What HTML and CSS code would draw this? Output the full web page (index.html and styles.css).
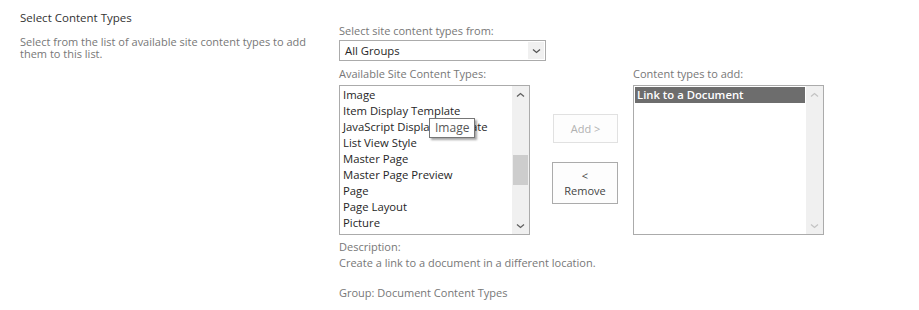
FILE: index.html
```html
<!DOCTYPE html>
<html>
<head>
<meta charset="utf-8">
<link rel="stylesheet" href="styles.css">
</head>
<body>
<div class="section">
  <div class="intro">
    <h3 class="title">Select Content Types</h3>
    <p class="desc">Select from the list of available site content types to add them to this list.</p>
  </div>
  <div class="form">
    <div class="label">Select site content types from:</div>
    <div class="dropdown">
      <span class="dd-value">All Groups</span>
      <span class="dd-btn"><svg width="9" height="6" viewBox="0 0 9 6"><path d="M1 1.5 L4.5 4.5 L8 1.5" fill="none" stroke="#555" stroke-width="1.3"/></svg></span>
    </div>
    <div class="lists">
      <div class="group">
        <div class="label">Available Site Content Types:</div>
        <div class="listbox">
          <ul class="items">
            <li>Image</li>
            <li>Item Display Template</li>
            <li>JavaScript Display Template</li>
            <li>List View Style</li>
            <li>Master Page</li>
            <li>Master Page Preview</li>
            <li>Page</li>
            <li>Page Layout</li>
            <li>Picture</li>
            <li>Project Page</li>
          </ul>
          <div class="scrollbar">
            <span class="arrow"><svg width="9" height="6" viewBox="0 0 9 6"><path d="M1 4.5 L4.5 1.5 L8 4.5" fill="none" stroke="#606060" stroke-width="1.3"/></svg></span>
            <div class="track"><div class="thumb"></div></div>
            <span class="arrow"><svg width="9" height="6" viewBox="0 0 9 6"><path d="M1 1.5 L4.5 4.5 L8 1.5" fill="none" stroke="#606060" stroke-width="1.3"/></svg></span>
          </div>
          <div class="tooltip">Image</div>
        </div>
      </div>
      <div class="buttons">
        <div class="btn disabled">Add &gt;</div>
        <div class="btn remove">&lt;<br>Remove</div>
      </div>
      <div class="group">
        <div class="label">Content types to add:</div>
        <div class="listbox">
          <ul class="items">
            <li class="selected">Link to a Document</li>
          </ul>
          <div class="scrollbar">
            <span class="arrow"><svg width="9" height="6" viewBox="0 0 9 6"><path d="M1 4.5 L4.5 1.5 L8 4.5" fill="none" stroke="#c4c4c4" stroke-width="1.3"/></svg></span>
            <div class="track"></div>
            <span class="arrow"><svg width="9" height="6" viewBox="0 0 9 6"><path d="M1 1.5 L4.5 4.5 L8 1.5" fill="none" stroke="#c4c4c4" stroke-width="1.3"/></svg></span>
          </div>
        </div>
      </div>
    </div>
    <div class="info">
      <div>Description:</div>
      <div>Create a link to a document in a different location.</div>
      <div class="grp">Group: Document Content Types</div>
    </div>
  </div>
</div>
</body>
</html>
```

FILE: styles.css
```css
html, body {
  margin: 0;
  padding: 0;
  background: #ffffff;
}
body {
  font-family: "Open Sans", "Noto Sans", sans-serif;
  color: #444444;
}
.section {
  display: flex;
  padding-top: 9px;
}
.intro {
  width: 299px;
  padding-left: 20px;
  padding-right: 20px;
}
.title {
  margin: 0;
  font-weight: normal;
  font-size: 11.5px;
  line-height: 17px;
  color: #333333;
}
.desc {
  margin: 10px 0 0;
  font-size: 11px;
  line-height: 12px;
  color: #777777;
}
.form {
  padding-top: 14px;
  font-size: 11px;
  color: #777777;
}
.label {
  line-height: 16px;
  height: 16px;
  color: #777777;
}
.dropdown {
  margin-top: 1px;
  width: 205px;
  height: 19px;
  border: 1px solid #ababab;
  display: flex;
  align-items: center;
  justify-content: space-between;
  color: #262626;
  font-size: 11.3px;
}
.dd-value {
  padding-left: 5px;
}
.dd-btn {
  width: 16px;
  height: 17px;
  margin-right: 1px;
  background: #f0f0f0;
  display: flex;
  align-items: center;
  justify-content: center;
}
.lists {
  display: flex;
  margin-top: 5px;
}
.listbox {
  position: relative;
  margin-top: 3px;
  width: 189px;
  height: 148px;
  border: 1px solid #ababab;
  display: flex;
  overflow: hidden;
}
.items {
  list-style: none;
  margin: 0;
  padding: 1px 1px 0;
  flex: 1;
  font-size: 11.3px;
  color: #262626;
}
.items li {
  height: 16px;
  line-height: 16px;
  padding-left: 2px;
  white-space: nowrap;
}
.items li.selected {
  background: #6d6d6d;
  color: #ffffff;
  font-weight: 600;
}
.scrollbar {
  width: 17px;
  background: #f0f0f0;
  display: flex;
  flex-direction: column;
}
.arrow {
  height: 17px;
  display: flex;
  align-items: center;
  justify-content: center;
}
.track {
  flex: 1;
  position: relative;
}
.thumb {
  margin: 52px 1px 0;
  height: 30px;
  background: #cdcdcd;
}
.tooltip {
  position: absolute;
  left: 89px;
  top: 32px;
  padding: 0 5px;
  height: 18px;
  line-height: 18px;
  border: 1px solid #767676;
  background: #ffffff;
  color: #575757;
  font-size: 12px;
  box-shadow: 2px 2px 2px rgba(0, 0, 0, 0.35);
}
.buttons {
  width: 66px;
  margin-left: 22px;
  margin-right: 15px;
  padding-top: 48px;
  display: flex;
  flex-direction: column;
  align-items: center;
}
.btn {
  box-sizing: border-box;
  text-align: center;
  font-size: 11px;
  color: #444444;
  border: 1px solid #ababab;
  background: #fdfdfd;
}
.btn.disabled {
  width: 65px;
  height: 29px;
  line-height: 27px;
  border-color: #e1e1e1;
  color: #b1b1b1;
  margin-left: 1px;
}
.btn.remove {
  margin-top: 19px;
  width: 66px;
  height: 42px;
  line-height: 15px;
  padding-top: 5px;
}
.info {
  margin-top: 4px;
  line-height: 16px;
  font-size: 11px;
  color: #777777;
}
.info .grp {
  margin-top: 14px;
}
```
